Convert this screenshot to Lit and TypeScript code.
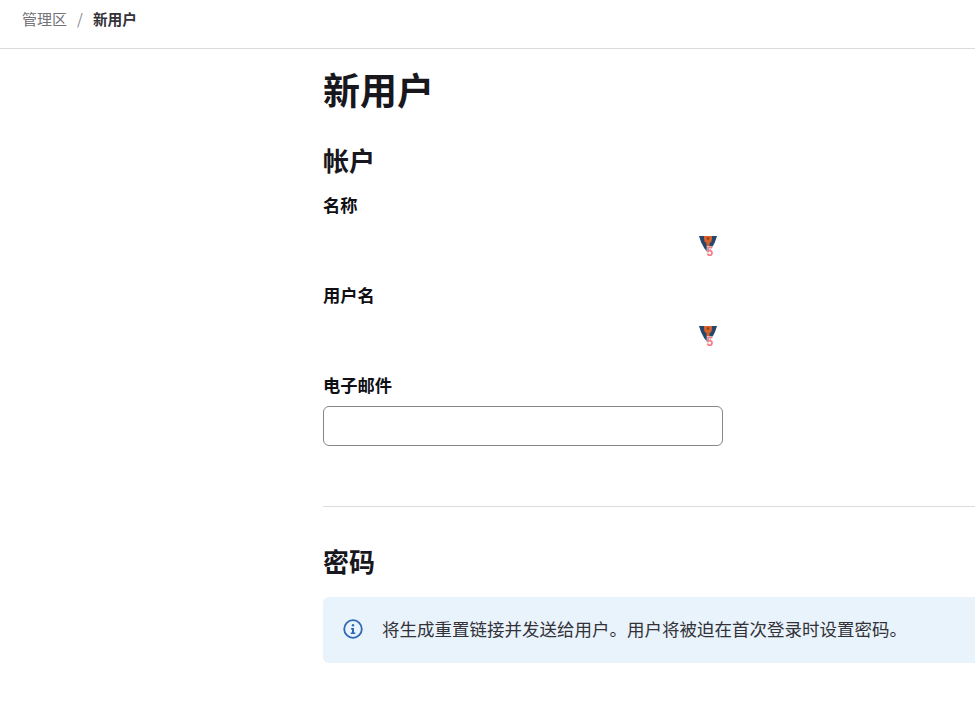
import { LitElement, html, css } from 'lit';
import { customElement } from 'lit/decorators.js';

const fieldIcon = html`
  <svg class="field-icon" viewBox="0 0 18 22" width="18" height="22" aria-hidden="true">
    <path d="M0 0H18L16 6Q13 13 9 17Q5 13 2 6Z" fill="#24476b" />
    <path d="M5 0H13V3Q13 6 10.500 7V11H7.500V7Q5 6 5 3Z" fill="#d9622b" />
    <circle cx="9" cy="2.500" r="1.200" fill="#8a3f22" />
    <text x="7.500" y="19.500" class="five">5</text>
  </svg>
`;

@customElement('app-root')
export class AppRoot extends LitElement {
  static styles = css`
    :host {
      display: block;
      height: 703px;
      overflow: hidden;
      font-family: 'Noto Sans CJK SC', 'Noto Sans', sans-serif;
      color: #18171d;
      background: #fff;
    }

    .top-bar {
      display: flex;
      align-items: center;
      height: 49px;
      padding: 0 22px 10px;
      box-sizing: border-box;
      border-bottom: 1px solid #dcdcde;
      font-size: 15px;
      line-height: 20px;
    }

    .crumb {
      color: #737278;
    }

    .sep {
      margin: 0 10px;
      color: #89888d;
    }

    .current {
      color: #333238;
      font-weight: 700;
      font-size: 14.700px;
    }

    main {
      margin-left: 323px;
    }

    h1 {
      margin: 0;
      padding-top: 14px;
      font-size: 37px;
      line-height: 52px;
      font-weight: 700;
    }

    h2 {
      margin: 0;
      font-weight: 700;
    }

    .account-title {
      margin-top: 27px;
      font-size: 26px;
      line-height: 36px;
    }

    .fields {
      display: flex;
      flex-direction: column;
      gap: 17px;
      margin-top: 15px;
      width: 400px;
    }

    label {
      display: block;
      font-size: 17.300px;
      line-height: 24px;
      font-weight: 700;
      color: #101014;
      margin-bottom: 9px;
    }

    .blank {
      display: flex;
      justify-content: flex-end;
      align-items: flex-start;
      height: 40px;
      padding: 10px 6px 0 0;
      box-sizing: border-box;
    }

    .field-icon {
      display: block;
    }

    .five {
      font-family: 'Liberation Sans', sans-serif;
      font-size: 12px;
      font-weight: 700;
      fill: #f9777f;
      stroke: #fff;
      stroke-width: 1px;
      paint-order: stroke;
    }

    input {
      display: block;
      width: 100%;
      height: 40px;
      box-sizing: border-box;
      border: 1px solid #868686;
      border-radius: 6px;
      background: #fff;
      padding: 0 12px;
      margin: 0;
      outline: none;
    }

    hr {
      margin: 60px 0 0;
      border: 0;
      border-top: 1px solid #dcdcde;
    }

    .password-title {
      margin-top: 35px;
      font-size: 26px;
      line-height: 38px;
    }

    .alert {
      display: flex;
      align-items: center;
      gap: 19px;
      margin-top: 17px;
      height: 66px;
      padding: 0 0 2px 20px;
      box-sizing: border-box;
      border-radius: 6px 0 0 6px;
      background: #e9f3fc;
      color: #333238;
      font-size: 17.500px;
      line-height: 24px;
      white-space: nowrap;
    }

    .alert svg {
      flex: none;
      display: block;
    }
  `;

  render() {
    return html`
      <nav class="top-bar">
        <span class="crumb">管理区</span>
        <span class="sep">/</span>
        <span class="current">新用户</span>
      </nav>
      <main>
        <h1>新用户</h1>
        <h2 class="account-title">帐户</h2>
        <div class="fields">
          <div>
            <label>名称</label>
            <div class="blank">${fieldIcon}</div>
          </div>
          <div>
            <label>用户名</label>
            <div class="blank">${fieldIcon}</div>
          </div>
          <div>
            <label>电子邮件</label>
            <input type="text" />
          </div>
        </div>
        <hr />
        <h2 class="password-title">密码</h2>
        <div class="alert">
          <svg viewBox="0 0 20 20" width="20" height="20" aria-hidden="true">
            <circle cx="10" cy="10" r="8.800" fill="none" stroke="#2f68b4" stroke-width="1.800" />
            <circle cx="10" cy="6.200" r="1.200" fill="#2f68b4" />
            <path d="M8 9H11V13.500H12.300V15H7.700V13.500H9V10.500H8Z" fill="#2f68b4" />
          </svg>
          <span>将生成重置链接并发送给用户。用户将被迫在首次登录时设置密码。</span>
        </div>
      </main>
    `;
  }
}

declare global {
  interface HTMLElementTagNameMap {
    'app-root': AppRoot;
  }
}
